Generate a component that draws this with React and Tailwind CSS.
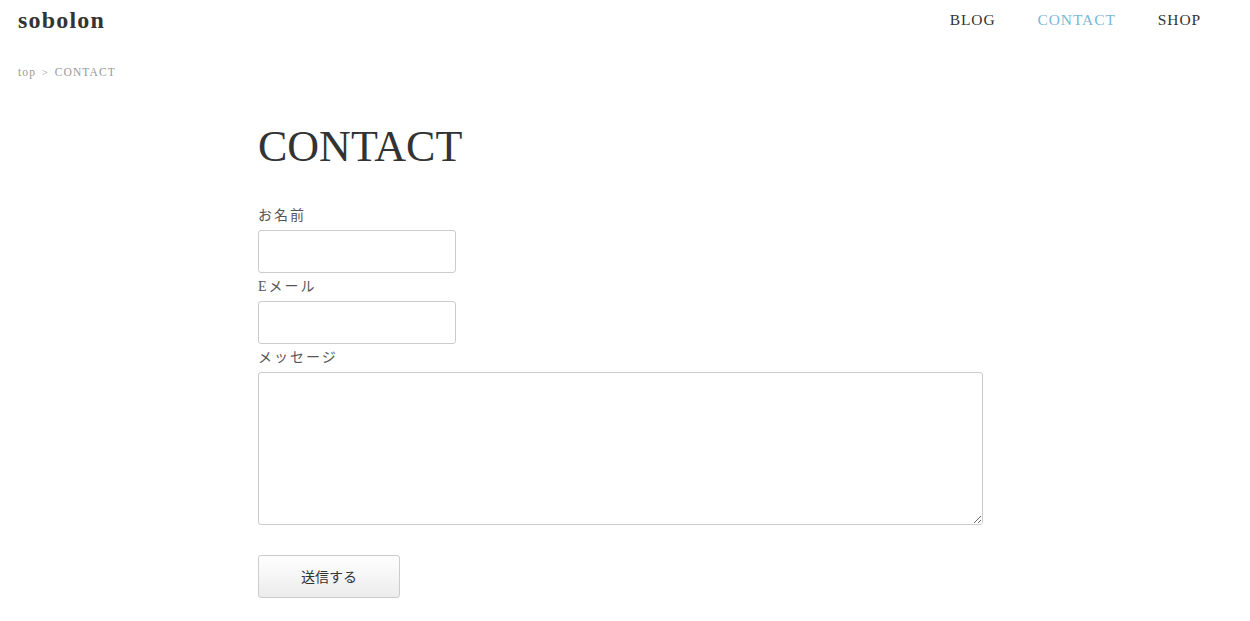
import React from "react";

const Field = ({ label, children }) => (
  <div>
    <label className="block text-[14px] leading-[28px] tracking-[2px] text-[#555]">{label}</label>
    {children}
  </div>
);

export default function App() {
  return (
    <div className="min-h-[621px] bg-white text-[#333] font-['Liberation_Serif','Noto_Sans_CJK_JP',serif]">
      {/* Header */}
      <header className="flex items-center justify-between h-[40px] pl-[18px] pr-[49px]">
        <a className="text-[24px] font-semibold tracking-[1.2px] text-[#333] leading-none pb-[1px]">sobolon</a>
        <nav className="flex gap-[42px] text-[15.5px] tracking-[0.9px]">
          <a className="text-[#333]">BLOG</a>
          <a className="text-[#7ab8d6]">CONTACT</a>
          <a className="text-[#333]">SHOP</a>
        </nav>
      </header>

      {/* Breadcrumb */}
      <div className="pl-[18px] mt-[24px] text-[11.5px] tracking-[1.1px] text-[#999] flex items-center gap-[6px]">
        <span>top</span>
        <span className="text-[10px]">&gt;</span>
        <span>CONTACT</span>
      </div>

      {/* Main */}
      <main className="w-[734px] mx-auto pt-[36px]">
        <h1 className="text-[44px] leading-[60px] text-[#333] mb-[25px]">CONTACT</h1>
        <form className="flex flex-col" onSubmit={(e) => e.preventDefault()}>
          <Field label="お名前">
            <input type="text" className="block w-[198px] h-[43px] border border-[#ccc] rounded-[3px] px-2" />
          </Field>
          <Field label="Eメール">
            <input type="email" className="block w-[198px] h-[43px] border border-[#ccc] rounded-[3px] px-2" />
          </Field>
          <Field label="メッセージ">
            <textarea className="block w-[725px] h-[153px] border border-[#ccc] rounded-[3px] p-2" />
          </Field>
          <div className="mt-[30px]">
            <button
              type="submit"
              className="w-[142px] h-[43px] border border-[#ccc] rounded-[3px] bg-gradient-to-b from-white to-[#ececec] text-[14px] text-[#333] font-['Noto_Sans_CJK_JP',sans-serif]"
            >
              送信する
            </button>
          </div>
        </form>
      </main>
    </div>
  );
}
